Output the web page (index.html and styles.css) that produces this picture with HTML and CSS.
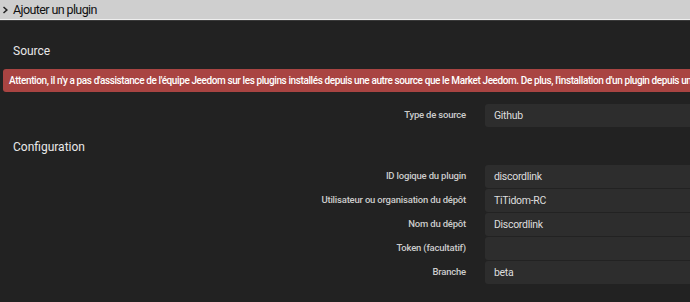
FILE: index.html
```html
<!DOCTYPE html>
<html lang="fr">
<head>
<meta charset="UTF-8" />
<title>Ajouter un plugin</title>
<link rel="stylesheet" href="styles.css">
</head>
<body>
<div class="panel">
    <div class="panel-heading">
        <svg class="chevron" width="6" height="8" viewBox="0 0 6 8"><path d="M1 0.5 L5 4 L1 7.5 L0 6.5 L2.8 4 L0 1.5 Z" fill="#222"/></svg>
        <span>Ajouter un plugin</span>
    </div>
    <div class="panel-body">
        <h3 class="section">Source</h3>
        <div class="alert">Attention, il n'y a pas d'assistance de l'équipe Jeedom sur les plugins installés depuis une autre source que le Market Jeedom. De plus, l'installation d'un plugin depuis une autre source que le Market Jeedom entraine la perte de toute garantie.</div>
        <div class="form source-form">
            <label>Type de source</label>
            <div class="input">Github</div>
        </div>
        <h3 class="section">Configuration</h3>
        <div class="form">
            <label>ID logique du plugin</label>
            <div class="input">discordlink</div>
            <label>Utilisateur ou organisation du dépôt</label>
            <div class="input">TiTidom-RC</div>
            <label>Nom du dépôt</label>
            <div class="input">Discordlink</div>
            <label>Token (facultatif)</label>
            <div class="input"></div>
            <label>Branche</label>
            <div class="input">beta</div>
        </div>
    </div>
</div>
</body>
</html>
```

FILE: styles.css
```css
body {
margin: 0;
background: #222;
font-family: Roboto, "Liberation Sans", sans-serif;
overflow: hidden;
width: 690px;
height: 302px;
}
.panel {
width: 900px;
}
.panel-heading {
display: flex;
align-items: center;
gap: 4px;
height: 19px;
padding-left: 3px;
background: #cfcfcf;
color: #111;
font-size: 12.5px;
letter-spacing: -0.6px;
border-bottom: 1px solid #eee;
box-shadow: 0 1px 0 #3a3a3a;
}
.panel-body {
padding: 24px 0 0 3px;
}
.section {
margin: 0 0 11px 10px;
font-size: 12px;
font-weight: 400;
color: #e8e8e8;
}
.alert {
background: #a94442;
color: #fff;
font-size: 10px;
letter-spacing: -0.4px;
font-weight: 500;
white-space: nowrap;
overflow: hidden;
padding: 5px 6px;
border-radius: 3px;
height: 13px;
line-height: 13px;
}
.form {
display: grid;
grid-template-columns: 463px 1fr;
column-gap: 19px;
row-gap: 1px;
}
.source-form {
margin: 12px 0 13px;
}
.form label {
text-align: right;
font-size: 9.5px;
letter-spacing: -0.2px;
font-weight: 500;
color: #ccc;
padding-top: 5px;
}
.input {
height: 23px;
line-height: 23px;
padding-left: 9px;
background: #2d2d2d;
border-radius: 3px;
color: #ddd;
font-size: 10.5px;
letter-spacing: -0.3px;
}
```
